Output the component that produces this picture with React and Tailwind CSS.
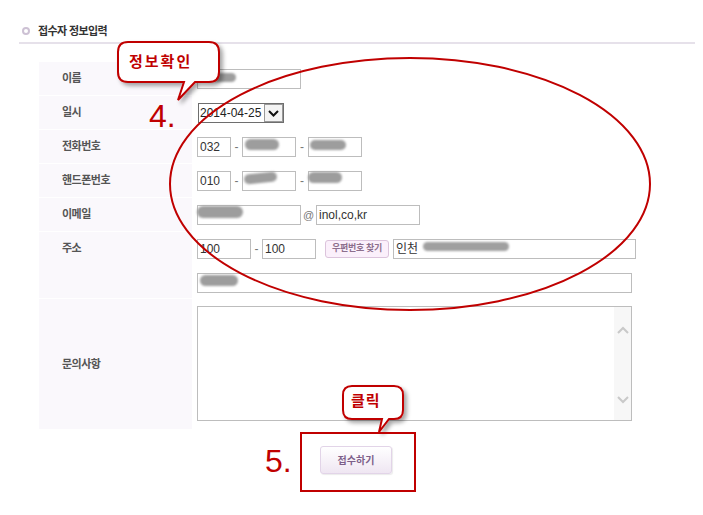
import React from 'react';

const FONT = "font-['Liberation_Sans','Noto_Sans_CJK_KR',sans-serif]";

function Box({ className = '', children }) {
    return (
        <div className={`relative h-[20px] shrink-0 border border-[#bdbdbd] bg-white pl-[2px] text-[12px] leading-[18px] text-[#333] ${className}`}>
            {children}
        </div>
    );
}

function Dash({ className = '' }) {
    return <span className={`shrink-0 text-center text-[12px] text-[#777] ${className}`}>-</span>;
}

function Label({ children, className = '' }) {
    return (
        <div className={`w-[153px] shrink-0 border-b border-white bg-[#faf8fc] pl-[23px] text-[11px] font-bold tracking-[-0.5px] text-[#555] ${className}`}>
            {children}
        </div>
    );
}

export default function App() {
    return (
        <div className={`relative h-[515px] w-[703px] overflow-hidden bg-white ${FONT}`}>
            {/* title */}
            <div className="flex items-center pl-[22px] pt-[24px]">
                <span className="h-[8px] w-[8px] rounded-full border-2 border-[#cdc1d4]" />
                <h2 className="ml-[8px] text-[11px] font-bold leading-[14px] tracking-[-0.6px] text-[#333]">접수자 정보입력</h2>
            </div>
            <div className="ml-[19px] mr-[8px] mt-[4px] h-[2px] bg-[#e6e1ea]" />

            {/* form table */}
            <div className="ml-[39px] mt-[18px] w-[600px]">
                <div className="flex h-[34px]">
                    <Label className="flex items-center">이름</Label>
                    <div className="flex items-center pl-[5px]">
                        <Box className="w-[104px]">
                            <span className="absolute left-[8px] top-[3px] h-[9px] w-[30px] rounded-full bg-[#9d9d9d] blur-[1px]" />
                        </Box>
                    </div>
                </div>

                <div className="flex h-[34px]">
                    <Label className="flex items-center">일시</Label>
                    <div className="flex items-center pl-[6px]">
                        <div className="flex h-[20px] w-[86px] items-center border border-[#6e6e6e] bg-white">
                            <span className="pl-[1px] text-[12px] leading-[18px] text-[#222]">2014-04-25</span>
                            <span className="ml-auto flex h-[18px] w-[19px] items-center justify-center border border-[#999] bg-[#f4f4f4]">
                                <svg width="11" height="7" viewBox="0 0 11 7">
                                    <path d="M1 1 L5.5 5.5 L10 1" fill="none" stroke="#111" strokeWidth="2" />
                                </svg>
                            </span>
                        </div>
                    </div>
                </div>

                <div className="flex h-[34px]">
                    <Label className="flex items-center">전화번호</Label>
                    <div className="flex items-center pl-[5px]">
                        <Box className="w-[34px]">032</Box>
                        <Dash className="w-[11px]" />
                        <Box className="w-[54px]">
                            <span className="absolute left-[2px] top-[1px] h-[11px] w-[34px] rounded-full bg-[#9d9d9d] blur-[1px]" />
                        </Box>
                        <Dash className="w-[12px]" />
                        <Box className="w-[54px]">
                            <span className="absolute left-[1px] top-[2px] h-[10px] w-[36px] rounded-full bg-[#9d9d9d] blur-[1px]" />
                        </Box>
                    </div>
                </div>

                <div className="flex h-[34px]">
                    <Label className="flex items-center">핸드폰번호</Label>
                    <div className="flex items-center pl-[5px]">
                        <Box className="w-[34px]">010</Box>
                        <Dash className="w-[11px]" />
                        <Box className="w-[54px]">
                            <span className="absolute left-[1px] top-[1px] h-[10px] w-[33px] -rotate-6 rounded-full bg-[#9d9d9d] blur-[1px]" />
                        </Box>
                        <Dash className="w-[12px]" />
                        <Box className="w-[54px]">
                            <span className="absolute left-[-1px] top-[0px] h-[11px] w-[34px] rounded-full bg-[#9d9d9d] blur-[1px]" />
                        </Box>
                    </div>
                </div>

                <div className="flex h-[34px]">
                    <Label className="flex items-center">이메일</Label>
                    <div className="flex items-center pl-[5px]">
                        <Box className="w-[104px]">
                            <span className="absolute left-[-1px] top-[0px] h-[12px] w-[46px] rounded-full bg-[#9d9d9d] blur-[1px]" />
                        </Box>
                        <span className="w-[15px] shrink-0 text-center text-[11px] text-[#777]">@</span>
                        <Box className="w-[104px]">inol,co,kr</Box>
                    </div>
                </div>

                <div className="flex h-[67px]">
                    <Label className="pt-[7px] leading-[18px]">주소</Label>
                    <div className="flex flex-col pl-[5px] pt-[7px]">
                        <div className="flex items-center">
                            <Box className="w-[54px]">100</Box>
                            <Dash className="w-[11px]" />
                            <Box className="w-[54px]">100</Box>
                            <button className="ml-[9px] h-[18px] w-[64px] shrink-0 rounded-[3px] border border-[#dcc4dc] bg-[#fbf0fb] text-[9px] font-bold tracking-[-0.3px] text-[#8d6f8d]">
                                우편번호 찾기
                            </button>
                            <Box className="ml-[4px] w-[243px] text-[12px]">
                                인천
                                <span className="absolute left-[29px] top-[2px] h-[9px] w-[86px] rounded-full bg-[#a0a0a0] blur-[0.8px]" />
                            </Box>
                        </div>
                        <Box className="mt-[14px] w-[435px]">
                            <span className="absolute left-[2px] top-[1px] h-[11px] w-[38px] rounded-full bg-[#9d9d9d] blur-[1px]" />
                        </Box>
                    </div>
                </div>

                <div className="flex h-[130px]">
                    <Label className="flex items-center border-b-0">문의사항</Label>
                    <div className="pl-[5px] pt-[7px]">
                        <div className="flex h-[115px] w-[435px] justify-end border border-[#bdbdbd] bg-white">
                            <div className="flex w-[17px] flex-col items-center justify-between bg-[#f7f7f7] pb-[16px] pt-[19px]">
                                <svg width="12" height="8" viewBox="0 0 12 8">
                                    <path d="M1 7 L6 2 L11 7" fill="none" stroke="#c9c9c9" strokeWidth="2" />
                                </svg>
                                <svg width="12" height="8" viewBox="0 0 12 8">
                                    <path d="M1 1 L6 6 L11 1" fill="none" stroke="#c9c9c9" strokeWidth="2" />
                                </svg>
                            </div>
                        </div>
                    </div>
                </div>
            </div>

            {/* submit */}
            <div className="flex justify-center pl-[9px] pt-[17px]">
                <button className="h-[28px] w-[72px] rounded-[3px] border border-[#e2d4e8] bg-gradient-to-b from-white to-[#efe6f2] text-[10px] font-bold text-[#7d5f8a] shadow-[1px_1px_1px_rgba(0,0,0,0.08)]">
                    접수하기
                </button>
            </div>

            {/* annotations */}
            <svg className="pointer-events-none absolute left-0 top-0" width="703" height="515">
                <defs>
                    <filter id="shade" x="-20%" y="-20%" width="150%" height="160%">
                        <feDropShadow dx="3" dy="3" stdDeviation="2" floodColor="#000" floodOpacity="0.35" />
                    </filter>
                </defs>
                <ellipse cx="410" cy="184" rx="240" ry="126" fill="none" stroke="#c00000" strokeWidth="2" />
                <path
                    d="M128,42 H209 Q219,42 219,52 V72 Q219,82 209,82 H195 L178,100 L184,82 H128 Q118,82 118,72 V52 Q118,42 128,42 Z"
                    fill="#fff"
                    stroke="#c00000"
                    strokeWidth="2"
                    filter="url(#shade)"
                />
                <path
                    d="M352,386 H394 Q403,386 403,395 V410 Q403,419 394,419 H389 L379,432 L382,419 H352 Q343,419 343,410 V395 Q343,386 352,386 Z"
                    fill="#fff"
                    stroke="#c00000"
                    strokeWidth="2"
                    filter="url(#shade)"
                />
                <rect x="301" y="433" width="114" height="58" fill="none" stroke="#c00000" strokeWidth="2" />
            </svg>
            <span className="absolute left-[129px] top-[52px] text-[15px] font-bold leading-[20px] tracking-[2px] text-[#c00000]">정보확인</span>
            <span className="absolute left-[351px] top-[391px] text-[15px] font-bold leading-[20px] tracking-[1px] text-[#c00000]">클릭</span>
            <span className="absolute left-[149px] top-[100px] text-[32px] leading-none text-[#c00000]">4.</span>
            <span className="absolute left-[265px] top-[445px] text-[32px] leading-none text-[#c00000]">5.</span>
        </div>
    );
}
